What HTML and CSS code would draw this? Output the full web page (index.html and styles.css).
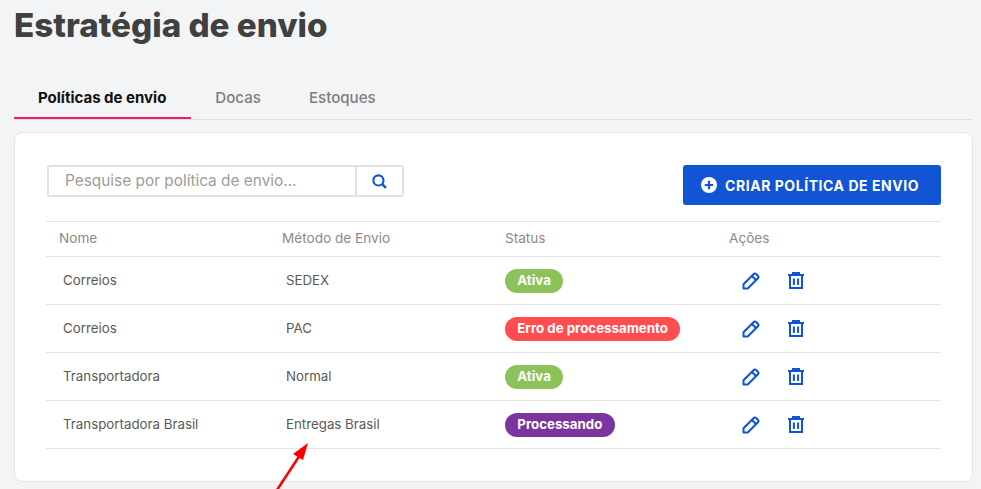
FILE: index.html
```html
<!DOCTYPE html>
<html lang="pt-BR">
<head>
<meta charset="utf-8">
<title>Estratégia de envio</title>
<link rel="stylesheet" href="styles.css">
</head>
<body>
<svg width="0" height="0" class="defs">
  <defs>
    <symbol id="pencil" viewBox="0 0 18 18"><path d="M1.5 16.5v-4.2L11.8 2a1.6 1.6 0 0 1 2.3 0l1.9 1.9a1.6 1.6 0 0 1 0 2.3L5.7 16.5zM10 4l4 4" fill="none" stroke="currentColor" stroke-width="2.1" stroke-linejoin="round"/></symbol>
    <symbol id="trash" viewBox="0 0 16 17"><path d="M0 3h16M5 3V1h6v2M2 3v13h12V3M5.9 6.5v6.5M10.1 6.5v6.5" fill="none" stroke="currentColor" stroke-width="2"/></symbol>
  </defs>
</svg>
<h1 class="title">Estratégia de envio</h1>
<nav class="tabs">
  <a class="tab tab-active">Políticas de envio</a>
  <a class="tab">Docas</a>
  <a class="tab">Estoques</a>
</nav>
<main class="card">
  <div class="toolbar">
    <div class="search">
      <span class="search-input">Pesquise por política de envio...</span>
      <span class="search-btn">
        <svg width="15" height="15" viewBox="0 0 14 14"><circle cx="6" cy="6" r="4.7" fill="none" stroke="currentColor" stroke-width="2"/><path d="M9.5 9.5l3.5 3.5" stroke="currentColor" stroke-width="2.4"/></svg>
      </span>
    </div>
    <button class="create">
      <svg width="16" height="16" viewBox="0 0 16 16"><circle cx="8" cy="8" r="8" fill="#fff"/><path d="M8 3.8v8.4M3.8 8h8.4" stroke="#1155d4" stroke-width="2.2"/></svg>
      CRIAR POLÍTICA DE ENVIO
    </button>
  </div>
  <table class="table">
    <thead>
      <tr><th class="col">Nome</th><th class="col">Método de Envio</th><th class="col">Status</th><th class="col-last">Ações</th></tr>
    </thead>
    <tbody>
      <tr>
        <td>Correios</td><td>SEDEX</td><td class="cell-status"><span class="pill pill-green">Ativa</span></td>
        <td class="cell-actions"><div class="actions"><svg class="ic-pencil"><use href="#pencil"/></svg><svg class="ic-trash"><use href="#trash"/></svg></div></td>
      </tr>
      <tr>
        <td>Correios</td><td>PAC</td><td class="cell-status"><span class="pill pill-red">Erro de processamento</span></td>
        <td class="cell-actions"><div class="actions"><svg class="ic-pencil"><use href="#pencil"/></svg><svg class="ic-trash"><use href="#trash"/></svg></div></td>
      </tr>
      <tr>
        <td>Transportadora</td><td>Normal</td><td class="cell-status"><span class="pill pill-green">Ativa</span></td>
        <td class="cell-actions"><div class="actions"><svg class="ic-pencil"><use href="#pencil"/></svg><svg class="ic-trash"><use href="#trash"/></svg></div></td>
      </tr>
      <tr>
        <td>Transportadora Brasil</td><td>Entregas Brasil</td><td class="cell-status"><span class="pill pill-purple">Processando</span></td>
        <td class="cell-actions"><div class="actions"><svg class="ic-pencil"><use href="#pencil"/></svg><svg class="ic-trash"><use href="#trash"/></svg></div></td>
      </tr>
    </tbody>
  </table>
</main>
<svg class="arrow" width="40" height="50" viewBox="0 0 40 50"><path d="M2 50L27 12" stroke="#f00" stroke-width="2.6"/><path d="M33 3L18 14l10 6z" fill="#f00"/></svg>
</body>
</html>
```
FILE: styles.css
```css
html, body { margin: 0; height: 489px; overflow: hidden; }
body {
  position: relative;
  background: #f3f4f6;
  font-family: "Inter", "Liberation Sans", sans-serif;
  padding: 0 8px 0 14px;
  box-sizing: border-box;
}
.defs { position: absolute; }
.title {
  margin: 0;
  padding-top: 4px;
  height: 47px;
  font-size: 33.2px;
  line-height: 42px;
  font-weight: 800;
  color: #404040;
}
.tabs {
  display: flex;
  margin-top: 28px;
  height: 41px;
  border-bottom: 1px solid #e0e0e0;
  box-sizing: border-box;
}
.tab {
  padding: 0 24px;
  height: 40px;
  box-sizing: border-box;
  line-height: 38px;
  font-size: 15.1px;
  font-weight: 500;
  color: #7d7d7d;
}
.tab-active {
  padding-right: 25px;
  color: #111;
  font-size: 15px;
  font-weight: 700;
  border-bottom: 2px solid #ee1c68;
}
.card {
  margin-top: 12px;
  height: 350px;
  box-sizing: border-box;
  background: #fff;
  border: 1px solid #e4e5e7;
  border-radius: 8px;
  padding: 32px 31px 0;
}
.toolbar {
  display: flex;
  justify-content: space-between;
  height: 56px;
}
.search {
  display: flex;
  width: 357px;
  height: 32px;
  margin-left: 1px;
  box-sizing: border-box;
  border: 2px solid #e2e2e2;
  border-radius: 3px;
}
.search-input {
  flex: 1;
  padding-left: 16px;
  font-size: 15.4px;
  line-height: 27px;
  color: #9c9c9c;
}
.search-btn {
  width: 45px;
  border-left: 2px solid #e2e2e2;
  display: flex;
  align-items: center;
  justify-content: center;
  color: #1155d4;
}
.create {
  display: flex;
  align-items: center;
  gap: 8px;
  width: 258px;
  height: 40px;
  padding: 0 0 0 18px;
  border: 0;
  border-radius: 3px;
  background: #1155d4;
  color: #fff;
  font-family: inherit;
  font-size: 14px;
  font-weight: 700;
  letter-spacing: 0.55px;
}
.table {
  width: 895px;
  border-collapse: collapse;
  table-layout: fixed;
  font-size: 13.3px;
}
.table th, .table td {
  border-top: 1px solid #e4e4e4;
  border-bottom: 1px solid #e4e4e4;
  text-align: left;
}
.table .col { width: 210px; }
.table th {
  height: 32px;
  padding: 0 0 2px 13px;
  font-size: 13.6px;
  font-weight: 400;
  color: #8a8a8a;
}
.table .col-last { padding-left: 14px; }
.table td {
  height: 45px;
  padding: 0 0 2px 17px;
  color: #5a5a5a;
}
.table .cell-status { height: 47px; padding: 0 0 0 13px; }
.table .cell-actions { height: 47px; padding: 0 0 0 27px; }
.pill {
  display: inline-block;
  height: 24px;
  line-height: 23px;
  padding: 0 12.3px;
  border-radius: 12px;
  color: #fff;
  font-size: 13.3px;
  font-weight: 700;
}
.pill-green { background: #8cc25a; }
.pill-red { background: #ff4d50; }
.pill-purple { background: #7b35a0; }
.actions {
  display: flex;
  align-items: center;
  gap: 28px;
  color: #1155d4;
}
.ic-pencil { width: 18px; height: 18px; }
.ic-trash { width: 16px; height: 17px; }
.arrow { position: absolute; left: 275px; top: 440px; }
```
